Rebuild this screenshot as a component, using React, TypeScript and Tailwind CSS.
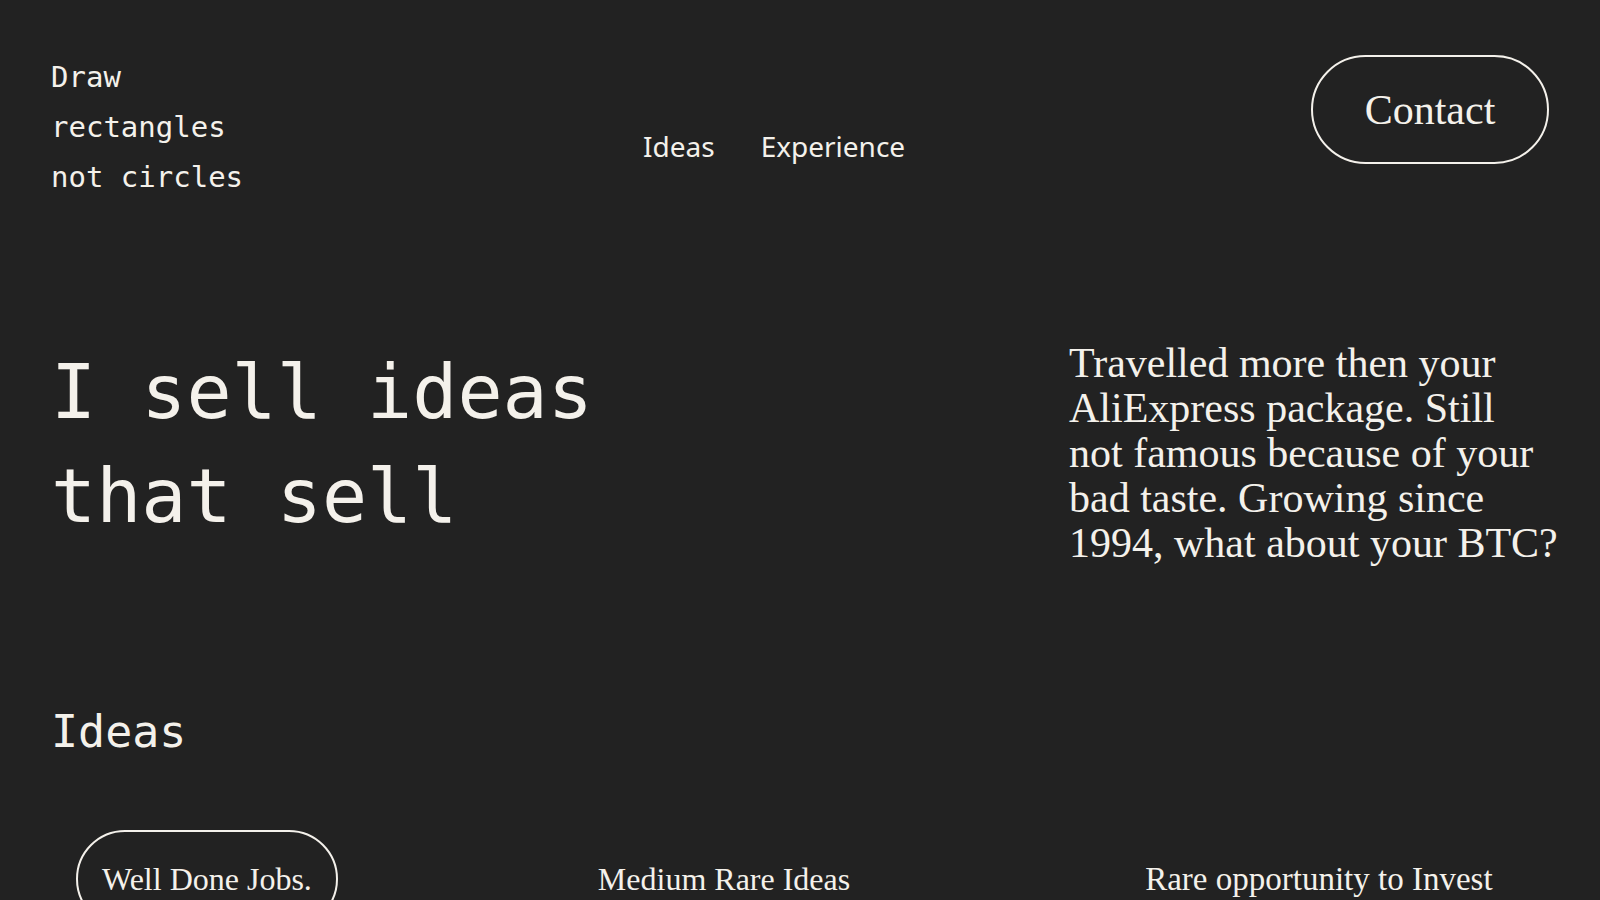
import React from "react";

const mono = "font-['DejaVu_Sans_Mono','Liberation_Mono',monospace]";
const serif = "font-['Liberation_Serif','DejaVu_Serif',serif]";
const sans = "font-['Noto_Sans','Open_Sans',sans-serif]";

export default function App() {
  return (
    <div className="w-[1600px] h-[900px] overflow-hidden bg-[#222222] text-[#f4f1eb]">
      <div className="px-[51px] pt-[52px]">
        {/* Header */}
        <header className="flex items-start">
          <div className={`${mono} w-[592px] text-[29px] leading-[50px]`}>
            <div>Draw</div>
            <div>rectangles</div>
            <div>not circles</div>
          </div>
          <nav className={`${sans} mt-[75px] flex gap-[46px] text-[28px] leading-[38px]`}>
            <a>Ideas</a>
            <a>Experience</a>
          </nav>
          <button
            className={`${serif} ml-auto mt-[3px] flex h-[109px] w-[238px] items-center justify-center rounded-full border-2 border-[#f4f1eb] text-[42px] leading-none`}
          >
            Contact
          </button>
        </header>

        {/* Hero */}
        <section className="mt-[138px] flex items-start justify-between">
          <h1 className={`${mono} text-[75px] leading-[104px] font-normal`}>
            I sell ideas
            <br />
            that sell
          </h1>
          <p className={`${serif} w-[480px] whitespace-nowrap text-[42px] leading-[45px] mt-[1px]`}>
            Travelled more then your
            <br />
            AliExpress package. Still
            <br />
            not famous because of your
            <br />
            bad taste. Growing since
            <br />
            1994, what about your BTC?
          </p>
        </section>

        {/* Ideas */}
        <section className="mt-[140px]">
          <h2 className={`${mono} text-[45px] leading-[52px]`}>Ideas</h2>
          <div className={`${serif} mt-[72px] flex items-start pl-[25px] text-[32px] leading-[38px]`}>
            <div className="rounded-full border-2 border-[#f4f1eb] px-[24px] pt-[28px] pb-[28px]">
              Well Done Jobs.
            </div>
            <div className="ml-[260px] pt-[30px]">Medium Rare Ideas</div>
            <div className="ml-[295px] pt-[30px] text-[33px]">Rare opportunity to Invest</div>
          </div>
        </section>
      </div>
    </div>
  );
}
